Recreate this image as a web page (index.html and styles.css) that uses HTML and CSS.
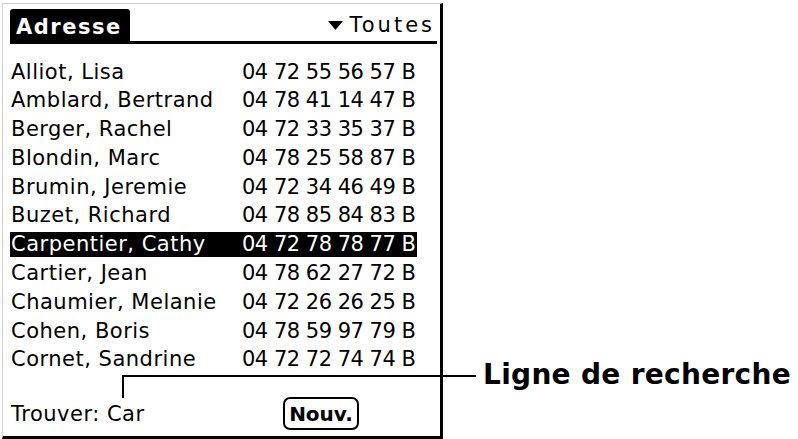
FILE: index.html
```html
<!DOCTYPE html>
<html lang="fr">
<head>
<meta charset="utf-8">
<title>Adresse</title>
<link rel="stylesheet" href="styles.css">
</head>
<body>
<div class="page">
  <div class="screen">
    <div class="header">
      <div class="tab">Adresse</div>
      <div class="header-rest">
        <svg class="tri" width="15" height="9" viewBox="0 0 15 9"><polygon points="0,0 15,0 7.5,9" fill="#000"/></svg>
        <span class="cat">Toutes</span>
      </div>
    </div>
    <div class="list">
      <div class="row"><span class="name">Alliot, Lisa</span><span class="phone">04 72 55 56 57 B</span></div>
      <div class="row"><span class="name">Amblard, Bertrand</span><span class="phone">04 78 41 14 47 B</span></div>
      <div class="row"><span class="name">Berger, Rachel</span><span class="phone">04 72 33 35 37 B</span></div>
      <div class="row"><span class="name">Blondin, Marc</span><span class="phone">04 78 25 58 87 B</span></div>
      <div class="row"><span class="name">Brumin, Jeremie</span><span class="phone">04 72 34 46 49 B</span></div>
      <div class="row"><span class="name">Buzet, Richard</span><span class="phone">04 78 85 84 83 B</span></div>
      <div class="row selected"><span class="name">Carpentier, Cathy</span><span class="phone">04 72 78 78 77 B</span></div>
      <div class="row"><span class="name">Cartier, Jean</span><span class="phone">04 78 62 27 72 B</span></div>
      <div class="row"><span class="name">Chaumier, Melanie</span><span class="phone">04 72 26 26 25 B</span></div>
      <div class="row"><span class="name">Cohen, Boris</span><span class="phone">04 78 59 97 79 B</span></div>
      <div class="row"><span class="name">Cornet, Sandrine</span><span class="phone">04 72 72 74 74 B</span></div>
    </div>
    <div class="footer">
      <span class="find">Trouver: Car</span>
      <span class="btn">Nouv.</span>
    </div>
  </div>
  <div class="callout-line"></div>
  <div class="callout">Ligne de recherche</div>
</div>
</body>
</html>
```
FILE: styles.css
```css
html, body {
  margin: 0;
  padding: 0;
  background: #fff;
}
.page {
  position: relative;
  width: 798px;
  height: 439px;
  overflow: hidden;
}
.screen {
  position: absolute;
  left: 2px;
  top: 3px;
  width: 441px;
  height: 436px;
  box-sizing: border-box;
  border-left: 1px solid #d0d0d0;
  border-top: 1px solid #d0d0d0;
  border-right: 3px solid #000;
  border-bottom: 3px solid #000;
  padding: 5px 3px 0 7px;
  font-family: "DejaVu Sans", sans-serif;
  color: #000;
  display: flex;
  flex-direction: column;
}
.header {
  display: flex;
  align-items: flex-end;
  height: 35px;
}
.tab {
  background: #000;
  color: #fff;
  font-family: "DejaVu Sans", sans-serif;
  font-weight: bold;
  font-size: 21px;
  letter-spacing: 1.5px;
  line-height: 24px;
  height: 35px;
  width: 120px;
  box-sizing: border-box;
  padding: 6px 0 0 6px;
  border-radius: 3px 3px 0 0;
}
.header-rest {
  flex: 1;
  height: 35px;
  box-sizing: border-box;
  border-bottom: 3px solid #000;
  display: flex;
  align-items: flex-start;
  justify-content: flex-end;
  padding: 4px 2px 0 0;
}
.tri {
  margin: 8px 6px 0 0;
}
.cat {
  font-size: 21px;
  letter-spacing: 3px;
  line-height: 24px;
}
.list {
  display: flex;
  flex-direction: column;
  gap: 3.8px;
  margin-top: 15px;
  width: 407px;
}
.row {
  height: 25px;
  display: flex;
  align-items: center;
  font-size: 21px;
  white-space: nowrap;
}
.row.selected {
  background: #000;
  color: #fff;
}
.name {
  width: 231px;
  padding-left: 1px;
  letter-spacing: 0.5px;
}
.phone {
  letter-spacing: -0.5px;
}
.footer {
  display: flex;
  align-items: center;
  margin-top: 25px;
  height: 34px;
}
.find {
  font-size: 21px;
  letter-spacing: 0.5px;
  width: 272px;
  padding-left: 1px;
}
.btn {
  font-size: 20px;
  font-weight: bold;
  border: 2px solid #000;
  border-radius: 7px;
  width: 76px;
  height: 33px;
  box-sizing: border-box;
  display: flex;
  align-items: center;
  justify-content: center;
}
.callout-line {
  position: absolute;
  left: 122px;
  top: 375px;
  width: 354px;
  height: 23px;
  border-left: 2px solid #000;
  border-top: 2px solid #000;
  box-sizing: border-box;
}
.callout {
  position: absolute;
  left: 483px;
  top: 358px;
  font-family: "DejaVu Sans", sans-serif;
  font-weight: bold;
  font-size: 28px;
  letter-spacing: 0.3px;
  line-height: 34px;
  white-space: nowrap;
}
```
